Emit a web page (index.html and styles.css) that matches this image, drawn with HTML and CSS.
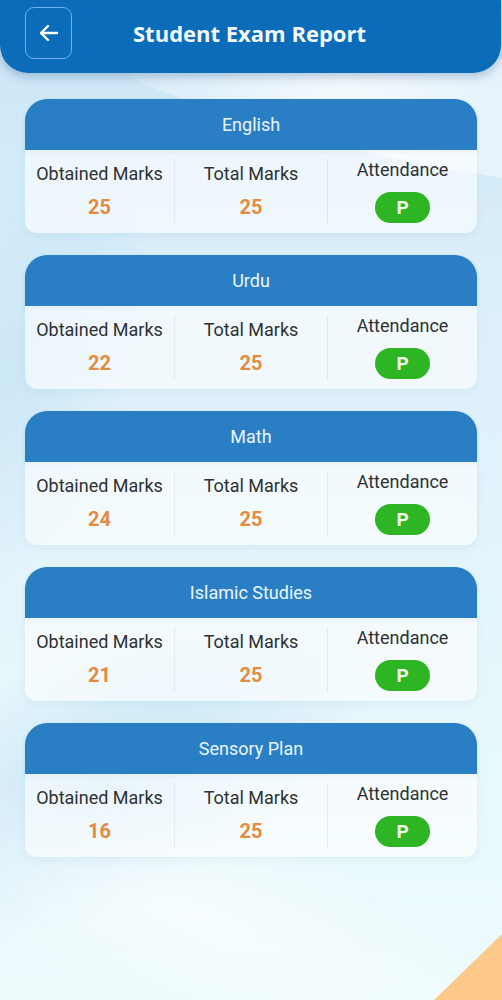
FILE: index.html
```html
<!DOCTYPE html>
<html>
<head>
<meta charset="utf-8">
<link rel="stylesheet" href="styles.css">
</head>
<body>
<div class="page">
  <div class="bg-swoosh s1"></div>
  <div class="bg-swoosh s2"></div>
  <div class="bg-swoosh s3"></div>
  <div class="bg-swoosh s4"></div>
  <div class="corner"></div>
  <header class="topbar">
    <button class="back">
      <svg width="24" height="24" viewBox="0 0 24 24" fill="none" stroke="#fff" stroke-width="2.4" stroke-linecap="round" stroke-linejoin="round"><path d="M20 12H4.5"/><path d="M11 5l-7 7 7 7"/></svg>
    </button>
    <h1 class="title">Student Exam Report</h1>
  </header>
  <main class="list">
    <section class="card">
      <div class="card-head">English</div>
      <div class="card-body">
        <div class="col"><div class="label">Obtained Marks</div><div class="num">25</div></div>
        <div class="col"><div class="label">Total Marks</div><div class="num">25</div></div>
        <div class="col att"><div class="label">Attendance</div><div class="pill">P</div></div>
      </div>
    </section>
    <section class="card">
      <div class="card-head">Urdu</div>
      <div class="card-body">
        <div class="col"><div class="label">Obtained Marks</div><div class="num">22</div></div>
        <div class="col"><div class="label">Total Marks</div><div class="num">25</div></div>
        <div class="col att"><div class="label">Attendance</div><div class="pill">P</div></div>
      </div>
    </section>
    <section class="card">
      <div class="card-head">Math</div>
      <div class="card-body">
        <div class="col"><div class="label">Obtained Marks</div><div class="num">24</div></div>
        <div class="col"><div class="label">Total Marks</div><div class="num">25</div></div>
        <div class="col att"><div class="label">Attendance</div><div class="pill">P</div></div>
      </div>
    </section>
    <section class="card">
      <div class="card-head">Islamic Studies</div>
      <div class="card-body">
        <div class="col"><div class="label">Obtained Marks</div><div class="num">21</div></div>
        <div class="col"><div class="label">Total Marks</div><div class="num">25</div></div>
        <div class="col att"><div class="label">Attendance</div><div class="pill">P</div></div>
      </div>
    </section>
    <section class="card">
      <div class="card-head">Sensory Plan</div>
      <div class="card-body">
        <div class="col"><div class="label">Obtained Marks</div><div class="num">16</div></div>
        <div class="col"><div class="label">Total Marks</div><div class="num">25</div></div>
        <div class="col att"><div class="label">Attendance</div><div class="pill">P</div></div>
      </div>
    </section>
  </main>
</div>
</body>
</html>
```
FILE: styles.css
```css
* { box-sizing: border-box; }
html, body { margin: 0; padding: 0; }
body {
  width: 502px;
  height: 1000px;
  overflow: hidden;
  font-family: Roboto, "Noto Sans", Arial, sans-serif;
}
.page {
  position: relative;
  width: 502px;
  height: 1000px;
  overflow: hidden;
  background: linear-gradient(180deg, #c9e4f5 0%, #dcf0fa 30%, #e4f5fb 60%, #edfbfd 100%);
}
.bg-swoosh {
  position: absolute;
  border-radius: 50%;
  pointer-events: none;
}
.s1 {
  left: 60px; top: 40px; width: 700px; height: 120px;
  background: linear-gradient(90deg, rgba(255,255,255,0) 0%, rgba(255,255,255,0.75) 40%, rgba(255,255,255,0) 100%);
  transform: rotate(12deg);
}
.s2 {
  left: -200px; top: 650px; width: 600px; height: 260px;
  background: radial-gradient(ellipse at center, rgba(180,218,242,0.6) 0%, rgba(180,218,242,0) 70%);
  transform: rotate(-25deg);
}
.s3 {
  left: -150px; top: 820px; width: 700px; height: 200px;
  background: radial-gradient(ellipse at center, rgba(255,255,255,0.6) 0%, rgba(255,255,255,0) 70%);
  transform: rotate(18deg);
}
.s4 {
  left: -120px; top: 120px; width: 260px; height: 500px;
  background: radial-gradient(ellipse at center, rgba(185,220,242,0.5) 0%, rgba(185,220,242,0) 70%);
  transform: rotate(20deg);
}
.corner {
  position: absolute;
  right: 0; bottom: 0;
  width: 68px; height: 66px;
  background: #fdc98b;
  clip-path: polygon(100% 0, 100% 100%, 0 100%);
}
.topbar {
  position: relative;
  height: 73px;
  margin: 0 1px 0 0;
  background: #0b6cb9;
  border-radius: 0 0 28px 28px;
  box-shadow: 0 4px 10px rgba(0, 60, 120, 0.25);
  display: flex;
  align-items: center;
  padding: 0 0 0 25px;
}
.back {
  width: 47px;
  height: 52px;
  margin-top: -8px;
  border: 1.2px solid #6fb0e6;
  border-radius: 9px;
  background: transparent;
  display: flex;
  align-items: center;
  justify-content: center;
  padding: 0;
}
.title {
  margin: -7px 0 0 61px;
  color: #f4f9ff;
  font-family: "Open Sans", Roboto, sans-serif;
  font-size: 22px;
  font-weight: 700;
}
.list {
  position: relative;
  display: flex;
  flex-direction: column;
  gap: 22px;
  padding: 26px 25px 0 25px;
}
.card {
  height: 134px;
  display: flex;
  flex-direction: column;
}
.card-head {
  flex: 0 0 51px;
  background: #2a7fc4;
  border-radius: 22px 22px 0 0;
  color: #eaf5ff;
  font-size: 18px;
  display: flex;
  align-items: center;
  justify-content: center;
  box-shadow: 0 2px 4px rgba(20, 80, 140, 0.15);
}
.card-body {
  flex: 1;
  display: grid;
  grid-template-columns: 149px 153px 150px;
  background: rgba(255, 255, 255, 0.6);
  border-radius: 0 0 12px 12px;
  padding: 9px 0 9px;
  box-shadow: 0 3px 8px rgba(120, 170, 210, 0.12);
}
.col {
  display: flex;
  flex-direction: column;
  align-items: center;
  justify-content: center;
  gap: 11px;
  border-left: 1px solid rgba(150, 170, 190, 0.18);
}
.col:first-child { border-left: none; }
.label {
  font-size: 18px;
  line-height: 20px;
  color: #2e3134;
  white-space: nowrap;
}
.num {
  font-size: 20px;
  line-height: 24px;
  font-weight: 700;
  color: #e58b3f;
}
.att { gap: 12px; padding-bottom: 0; }
.pill {
  width: 55px;
  height: 31px;
  border-radius: 16px;
  background: #2db524;
  color: #f2fff0;
  font-size: 19px;
  font-weight: 700;
  display: flex;
  align-items: center;
  justify-content: center;
}
```
